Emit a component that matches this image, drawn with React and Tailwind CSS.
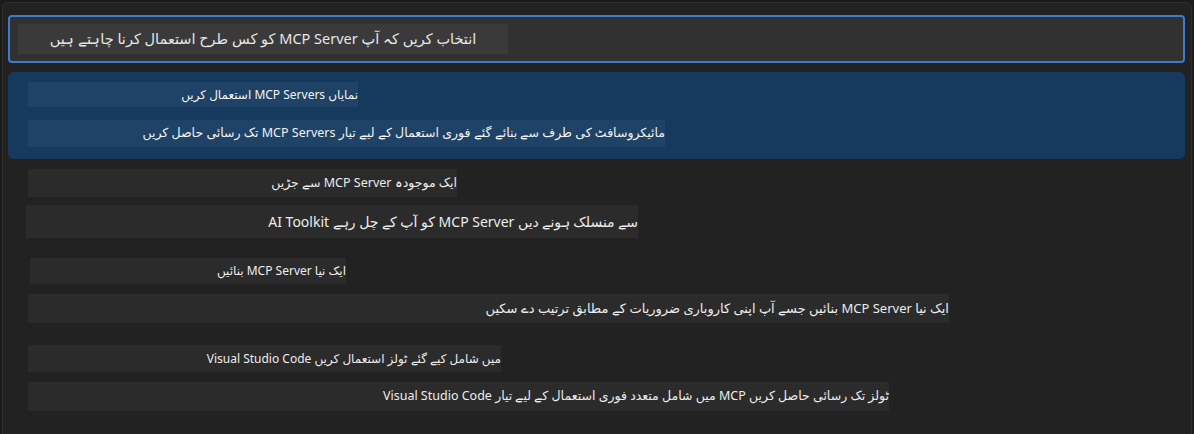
import React from "react";

const font = { fontFamily: '"Noto Sans", "DejaVu Sans", sans-serif' };

const Line = ({ text, className }) => (
  <div dir="rtl" className={`flex items-center text-right ${className}`}>
    <span className="whitespace-nowrap">{text}</span>
  </div>
);

const App = () => {
  return (
    <div className="w-[1194px] h-[434px] bg-[#1b1b1b] pt-[2px] px-[2px] overflow-hidden" style={font}>
      <div className="h-[440px] bg-[#222222] rounded-[6px] border border-[#2f2f2f] pt-[12px] pl-[5px] pr-[6px]">
        {/* input */}
        <div className="h-[48px] rounded-[4px] border-2 border-[#3c7bd0] bg-[#313131] pl-[8px] pt-[7px]">
          <div
            dir="rtl"
            className="w-[490px] h-[30px] bg-[#3a3a3a] flex items-center justify-center text-[14.5px] text-[#e6e6e6]"
          >
            <span className="whitespace-nowrap">انتخاب کریں کہ آپ MCP Server کو کس طرح استعمال کرنا چاہتے ہیں</span>
          </div>
        </div>

        {/* selected item */}
        <div className="mt-[9px] h-[87px] rounded-[6px] bg-[#163a5d] pt-[10px] pl-[20px]">
          <Line
            className="w-[330px] h-[25px] bg-[#1f4366] text-[12px] text-[#f2f2f2]"
            text="نمایاں MCP Servers استعمال کریں"
          />
          <Line
            className="mt-[13px] w-[637px] h-[27px] bg-[#1f4366] text-[12.5px] text-[#f2f2f2]"
            text="مائیکروسافٹ کی طرف سے بنائے گئے فوری استعمال کے لیے تیار MCP Servers تک رسائی حاصل کریں"
          />
        </div>

        {/* other items */}
        <div className="flex flex-col text-[#ececec]">
          <Line
            className="mt-[10px] ml-[20px] w-[429px] h-[28px] bg-[#2b2b2b] text-[12.5px]"
            text="ایک موجودہ MCP Server سے جڑیں"
          />
          <Line
            className="mt-[8px] ml-[18px] w-[612px] h-[33px] bg-[#2b2b2b] text-[14px]"
            text="سے منسلک ہونے دیں MCP Server کو آپ کے چل رہے AI Toolkit"
          />
          <Line
            className="mt-[20px] ml-[22px] w-[316px] h-[26px] bg-[#2b2b2b] text-[12px]"
            text="ایک نیا MCP Server بنائیں"
          />
          <Line
            className="mt-[10px] ml-[20px] w-[921px] h-[29px] bg-[#2b2b2b] text-[13px]"
            text="ایک نیا MCP Server بنائیں جسے آپ اپنی کاروباری ضروریات کے مطابق ترتیب دے سکیں"
          />
          <Line
            className="mt-[22px] ml-[20px] w-[473px] h-[27px] bg-[#2b2b2b] text-[12px]"
            text="میں شامل کیے گئے ٹولز استعمال کریں Visual Studio Code"
          />
          <Line
            className="mt-[10px] ml-[20px] w-[861px] h-[29px] bg-[#2b2b2b] text-[12.5px]"
            text="ٹولز تک رسائی حاصل کریں MCP میں شامل متعدد فوری استعمال کے لیے تیار Visual Studio Code"
          />
        </div>
      </div>
    </div>
  );
};

export default App;
